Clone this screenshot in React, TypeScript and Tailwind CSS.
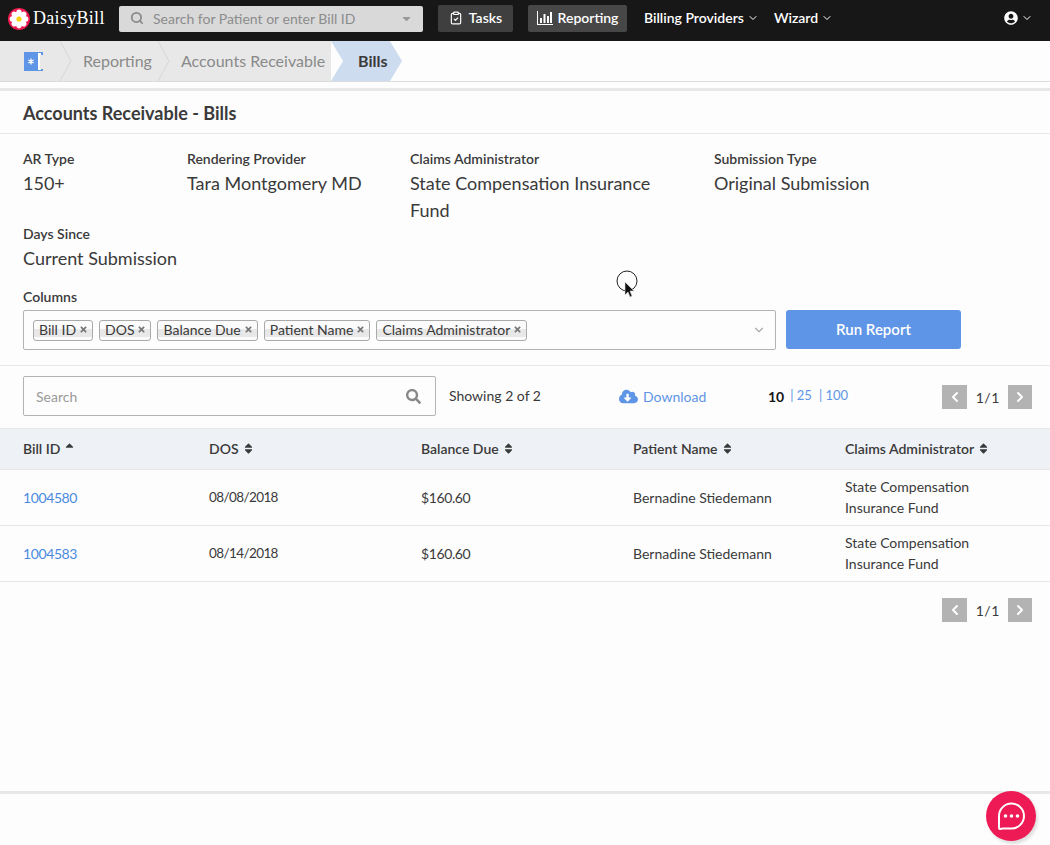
import { ChevronDown, ChevronLeft, ChevronRight, Search, ClipboardCheck } from 'lucide-react';
import { FaCloudDownloadAlt, FaSearch, FaSort, FaSortUp, FaTimes, FaUserCircle, FaCaretDown } from 'react-icons/fa';

const Flower = () => (
  <svg width="22" height="22" viewBox="0 0 22 22">
    <circle cx="11" cy="11" r="11" fill="#ec1c4e" />
    {[0, 45, 90, 135, 180, 225, 270, 315].map((a) => (
      <ellipse key={a} cx="11" cy="5.4" rx="2.9" ry="3.8" fill="#fff" transform={`rotate(${a} 11 11)`} />
    ))}
    <circle cx="11" cy="11" r="2.6" fill="#fbd20f" />
  </svg>
);

const ReportIcon = () => (
  <svg width="16" height="14" viewBox="0 0 16 14" fill="#fff">
    <rect x="0" y="0" width="1" height="14" />
    <rect x="0" y="13" width="16" height="1" />
    <rect x="3" y="7" width="2" height="5" />
    <rect x="6.500" y="3" width="2" height="9" />
    <rect x="10" y="5" width="2" height="7" />
    <rect x="13" y="1" width="2" height="11" />
  </svg>
);

const BookIcon = () => (
  <svg width="19" height="19" viewBox="0 0 19 19">
    <rect width="19" height="19" fill="#5f95e6" />
    <rect x="14" y="1" width="3" height="17" fill="#fff" />
    <rect x="16" y="3" width="3" height="14" fill="#e8e8e8" />
    <path d="M7 6.5v6M4.4 8l5.2 3M4.4 11l5.2-3" stroke="#fff" strokeWidth="1.3" />
  </svg>
);

const CrumbSeparator = () => (
  <svg width="13" height="40" viewBox="0 0 13 40" fill="none" className="shrink-0">
    <path d="M1 0l11 20L1 40" stroke="#d6d6d6" />
  </svg>
);

const Field = ({ label, value }: { label: string; value: string }) => (
  <div>
    <div className="text-[14px] leading-[20px] font-semibold text-[#3a3a3a]">{label}</div>
    <div className="mt-[1px] text-[18px] leading-[27px] text-[#3a3a3a]">{value}</div>
  </div>
);

const Tag = ({ label }: { label: string }) => (
  <span className="flex h-[21px] items-center gap-[3px] rounded-[3px] border border-[#aaa] bg-[linear-gradient(#fbfbfb_40%,#e8e8e8_40%,#e8e8e8_85%,#fbfbfb_85%)] pb-[1px] pl-[5px] pr-[4px] text-[14px] text-[#3a3a3a]">
    {label}
    <FaTimes className="text-[9px] text-[#777]" />
  </span>
);

const Pager = () => (
  <div className="flex items-center">
    <span className="flex h-[24px] w-[25px] items-center justify-center bg-[#b3b3b3] text-white">
      <ChevronLeft size={16} strokeWidth={3} />
    </span>
    <span className="w-[41px] text-center text-[14px] text-[#3a3a3a] [word-spacing:-3px]">1 / 1</span>
    <span className="flex h-[24px] w-[24px] items-center justify-center bg-[#b3b3b3] text-white">
      <ChevronRight size={16} strokeWidth={3} />
    </span>
  </div>
);

const columns = ['Bill ID', 'DOS', 'Balance Due', 'Patient Name', 'Claims Administrator'];

const bills = [
  { id: '1004580', dos: '08/08/2018' },
  { id: '1004583', dos: '08/14/2018' },
];

export default function App() {
  return (
    <div className="relative h-[845px] overflow-hidden bg-[#fdfdfd] font-['Lato','Liberation_Sans',sans-serif] text-[#3a3a3a]">
      {/* top nav */}
      <div className="flex h-[41px] items-center bg-[#171717] pb-[4px] text-[14px] text-white">
        <div className="ml-[8px] flex w-[111px] items-center gap-[3px]">
          <Flower />
          <span className="font-['Liberation_Serif',serif] text-[18px] tracking-[0.3px]">DaisyBill</span>
        </div>
        <div className="flex h-[26px] w-[304px] items-center rounded-[2px] bg-[#d9d9d9] pb-[1px] pl-[11px] pr-[10px] text-[#8c8c8c]">
          <Search size={14} strokeWidth={3} className="text-[#8a8a8a]" />
          <span className="ml-[9px] flex-1">Search for Patient or enter Bill ID</span>
          <FaCaretDown className="text-[13px] text-[#999]" />
        </div>
        <div className="ml-[15px] flex h-[27px] w-[75px] items-center justify-center gap-[6px] rounded-[2px] bg-[#3f3f3f] pb-[2px] font-semibold">
          <ClipboardCheck size={14} />
          Tasks
        </div>
        <div className="ml-[15px] flex h-[27px] w-[99px] items-center justify-center gap-[5px] rounded-[2px] bg-[#474747] pb-[2px] font-semibold">
          <ReportIcon />
          Reporting
        </div>
        <div className="ml-[17px] flex items-center gap-[3px] pb-[2px] font-semibold">
          Billing Providers
          <ChevronDown size={12} />
        </div>
        <div className="ml-[15px] flex items-center gap-[3px] pb-[2px] font-semibold">
          Wizard
          <ChevronDown size={12} />
        </div>
        <div className="ml-auto mr-[17px] flex items-center gap-[3px] pb-[2px]">
          <FaUserCircle className="text-[14px]" />
          <ChevronDown size={12} />
        </div>
      </div>

      {/* breadcrumb */}
      <div className="flex h-[41px] border-b border-[#dcdcdc] text-[16px]">
        <div className="flex h-[40px] items-center bg-[#e8e8e8] text-[#8a8a8a]">
          <div className="ml-[24px] mr-[16px]">
            <BookIcon />
          </div>
          <CrumbSeparator />
          <span className="ml-[11px] mr-[4px] w-[70px]">Reporting</span>
          <CrumbSeparator />
          <span className="ml-[11px] w-[150px] whitespace-nowrap">Accounts Receivable</span>
        </div>
        <div className="flex h-[40px] w-[71px] items-center bg-[#cddcee] pl-[27px] font-bold text-[#3a3a3a] [clip-path:polygon(0_0,83%_0,100%_50%,83%_100%,0_100%,17%_50%)]">
          Bills
        </div>
      </div>
      <div className="mt-[6px] h-[3px] bg-[#e8e8e8]" />

      {/* title */}
      <div className="flex h-[43px] items-center border-b border-[#e8e8e8] px-[23px] pt-[2px] text-[18px] font-bold">
        Accounts Receivable - Bills
      </div>

      {/* filters */}
      <div className="mt-[15px] grid grid-cols-[164px_223px_304px_1fr] px-[23px]">
        <Field label="AR Type" value="150+" />
        <Field label="Rendering Provider" value="Tara Montgomery MD" />
        <div className="w-[270px]">
          <Field label="Claims Administrator" value="State Compensation Insurance Fund" />
        </div>
        <Field label="Submission Type" value="Original Submission" />
        <div className="col-span-2">
          <Field label="Days Since" value="Current Submission" />
        </div>
      </div>

      {/* columns picker */}
      <div className="mt-[15px] px-[23px]">
        <div className="text-[14px] font-semibold leading-[20px]">Columns</div>
        <div className="mt-[3px] flex gap-[10px]">
          <div className="flex h-[40px] w-[753px] items-center gap-[6px] rounded-[2px] border border-[#b3b3b3] pl-[9px] pr-[9px]">
            {columns.map((c) => (
              <Tag key={c} label={c} />
            ))}
            <ChevronDown size={14} className="ml-auto text-[#aaa]" />
          </div>
          <button className="h-[39px] w-[175px] rounded-[3px] bg-[#5f95e6] text-[15px] font-semibold text-white">
            Run Report
          </button>
        </div>
      </div>

      {/* toolbar */}
      <div className="mt-[15px] flex h-[63px] items-center border-t border-[#e8e8e8] px-[23px] pb-[2px] text-[14px]">
        <div className="flex h-[40px] w-[413px] items-center justify-between rounded-[2px] border border-[#b3b3b3] pl-[12px] pr-[14px] text-[#999]">
          Search
          <FaSearch className="text-[15px] text-[#888]" />
        </div>
        <span className="ml-[13px] w-[170px] pb-[2px]">Showing 2 of 2</span>
        <span className="flex w-[149px] items-center gap-[5px] text-[#5f95e6]">
          <FaCloudDownloadAlt className="text-[19px]" />
          Download
        </span>
        <span className="font-bold text-[#171717]">10</span>
        <span className="ml-[6px] text-[13px] text-[#5f95e6]">| 25</span>
        <span className="ml-[7px] text-[13px] text-[#5f95e6]">| 100</span>
        <div className="ml-auto -mr-[5px] pt-[2px]">
          <Pager />
        </div>
      </div>

      {/* table */}
      <div className="grid h-[42px] grid-cols-[186px_212px_212px_212px_1fr] items-center border-y border-[#e6e6e6] bg-[#eef1f6] px-[23px] pb-[1px] text-[14px] font-semibold">
        {columns.map((c, i) => (
          <div key={c} className="flex items-center gap-[3px]">
            {c}
            {i === 0 ? <FaSortUp className="text-[13px]" /> : <FaSort className="text-[13px]" />}
          </div>
        ))}
      </div>
      {bills.map((b) => (
        <div
          key={b.id}
          className="grid h-[56px] grid-cols-[186px_212px_212px_212px_1fr] items-center border-b border-[#e6e6e6] px-[23px] pb-[1px] text-[14px]"
        >
          <a className="tracking-[-0.4px] text-[#4a8ae0]">{b.id}</a>
          <span className="text-[13.5px] tracking-[-0.6px]">{b.dos}</span>
          <span className="tracking-[-0.4px]">$160.60</span>
          <span>Bernadine Stiedemann</span>
          <span className="w-[160px] leading-[21px]">State Compensation Insurance Fund</span>
        </div>
      ))}
      <div className="mt-[16px] flex justify-end pr-[18px]">
        <Pager />
      </div>

      <div className="mt-[169px] h-[3px] bg-[#e8e8e8]" />

      {/* recorded cursor */}
      <svg width="24" height="30" viewBox="0 0 24 30" className="absolute left-[615px] top-[270px]">
        <circle cx="12" cy="11" r="10" fill="none" stroke="#222" />
        <path d="M10 12v13l3-3 2 5 2-1-2-5h4z" fill="#111" stroke="#ddd" strokeWidth="0.6" />
      </svg>

      {/* chat bubble */}
      <div className="absolute left-[986px] top-[791px] flex h-[50px] w-[50px] items-center justify-center rounded-full bg-[#ee1a55] shadow-[2px_3px_3px_rgba(0,0,0,0.12)]">
        <svg width="32" height="32" viewBox="0 0 32 32" fill="none">
          <path
            d="M4 28V16A12.500 12.500 0 1 1 16 28.500H8c-2 0-4 1.500-4-.5z"
            stroke="#fff"
            strokeWidth="2"
          />
          <circle cx="10.500" cy="16" r="1.800" fill="#fff" />
          <circle cx="16.500" cy="16" r="1.800" fill="#fff" />
          <circle cx="22.500" cy="16" r="1.800" fill="#fff" />
        </svg>
      </div>
    </div>
  );
}
